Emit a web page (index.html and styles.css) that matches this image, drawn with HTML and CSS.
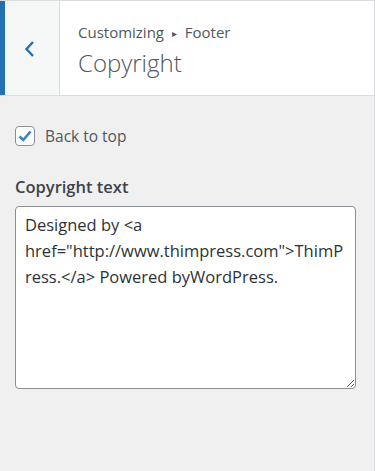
FILE: index.html
```html
<!DOCTYPE html>
<html lang="en">
<head>
<meta charset="UTF-8">
<meta name="viewport" content="width=device-width, initial-scale=1.0">
<title>Copyright - Customizer</title>
<link rel="stylesheet" href="styles.css">
</head>
<body>

<div class="panel">
    <div class="panel-header">
        <button class="back-btn" aria-label="Back">
            <svg width="14" height="18" viewBox="0 0 14 18"><path d="M10 2 L3.5 9 L10 16" fill="none" stroke="#2271b1" stroke-width="2.4"/></svg>
        </button>
        <div class="panel-title">
            <div class="crumbs">Customizing <span class="sep">&#9656;</span> Footer</div>
            <h2>Copyright</h2>
        </div>
    </div>

    <div class="panel-body">
        <label class="check-row">
            <span class="checkbox">
                <svg width="16" height="16" viewBox="0 0 16 16"><path d="M2.5 8.5 L6.3 12 L13.5 3.5" fill="none" stroke="#3582c4" stroke-width="2.6"/></svg>
            </span>
            Back to top
        </label>

        <div class="field">
            <label class="field-label" for="copyright">Copyright text</label>
            <textarea id="copyright" class="text-area">Designed by &lt;a href="http://www.thimpress.com"&gt;ThimPress.&lt;/a&gt; Powered byWordPress.</textarea>
        </div>
    </div>
</div>

</body>
</html>
```

FILE: styles.css
```css
body {
    margin: 0;
    font-family: "Open Sans", "Noto Sans", sans-serif;
    background-color: #f0f0f1;
    color: #3c434a;
}

.panel {
    height: 471px;
    box-sizing: border-box;
    border-top: 1px solid #dcdcde;
    border-right: 1px solid #dcdcde;
}

.panel-header {
    display: flex;
    height: 94px;
    background-color: #fff;
    border-bottom: 1px solid #dcdcde;
}

.back-btn {
    width: 60px;
    border: none;
    border-left: 5px solid #2271b1;
    border-right: 1px solid #dcdcde;
    background-color: #f6f7f7;
    display: flex;
    align-items: center;
    justify-content: center;
    padding: 2px 4px 0 0;
    cursor: pointer;
}

.panel-title {
    padding: 19px 18px 0;
    color: #50575e;
}

.crumbs {
    font-size: 15px;
    line-height: 24px;
}

.sep {
    font-size: 10px;
    margin: 0 4px;
    vertical-align: 1px;
}

.panel-title h2 {
    margin: 0;
    font-size: 24px;
    font-weight: 300;
    line-height: 36px;
}

.panel-body {
    padding: 29px 15px;
}

.check-row {
    display: flex;
    align-items: center;
    gap: 10px;
    font-size: 15.5px;
    color: #50575e;
}

.checkbox {
    flex: none;
    width: 20px;
    height: 20px;
    box-sizing: border-box;
    border: 1px solid #8c8f94;
    border-radius: 4px;
    background-color: #fff;
    display: flex;
    align-items: center;
    justify-content: center;
}

.field {
    margin-top: 28px;
}

.field-label {
    display: block;
    font-size: 16.5px;
    font-weight: 600;
    line-height: 24px;
    margin-bottom: 7px;
}

.text-area {
    display: block;
    width: 341px;
    height: 183px;
    box-sizing: border-box;
    padding: 5px 9px;
    border: 1px solid #8c8f94;
    border-radius: 4px;
    background-color: #fff;
    font-family: "Open Sans", "Noto Sans", sans-serif;
    font-size: 16.5px;
    line-height: 26px;
    color: #2c3338;
}
```
